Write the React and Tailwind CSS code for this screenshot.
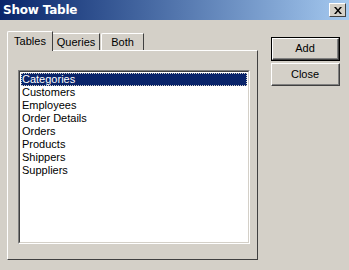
import React from "react";

const items = ["Categories","Customers","Employees","Order Details","Orders","Products","Shippers","Suppliers"];

export default function App() {
  return (
    <div className="w-[349px] h-[270px] bg-[#d4d0c8] flex flex-col overflow-hidden" style={{fontFamily: '"Liberation Sans", Arial, sans-serif'}}>
      <div className="h-[20px] flex items-center justify-between pl-[3px] pr-[3px] bg-gradient-to-r from-[#0a246a] to-[#a6caf0]">
        <span className="text-white font-bold text-[12px] leading-none" style={{fontFamily: '"DejaVu Sans", sans-serif', letterSpacing: '-0.2px'}}>Show Table</span>
        <div className="w-[17px] h-[14px] bg-[#d4d0c8] border-t border-l border-white border-r border-b border-r-[#404040] border-b-[#404040] flex items-center justify-center">
          <svg width="8" height="7" viewBox="0 0 8 7">
            <path d="M0 0h2l2 2.5L6 0h2L5 3.5 8 7H6L4 4.5 2 7H0l3-3.5z" fill="#000" />
          </svg>
        </div>
      </div>
      <div className="flex flex-row pl-[7px] pt-[11px]">
        <div className="flex flex-col w-[251px]">
          <div className="flex flex-row items-end h-[19px] relative z-10">
            <div className="w-[46px] h-[20px] bg-[#d4d0c8] border-l border-t border-white border-r border-r-[#404040] rounded-tl-[2px] flex items-start justify-center pt-[3px] text-[11px] text-black leading-[13px] -mb-px">Tables</div>
            <div className="w-[47px] h-[17px] bg-[#d4d0c8] border-t border-white border-r border-r-[#404040] flex items-start justify-center pt-[2px] text-[11px] text-black leading-[13px]">Queries</div>
            <div className="w-[43px] h-[17px] bg-[#d4d0c8] border-t border-l border-white border-r border-r-[#404040] rounded-tl-[2px] flex items-start justify-center pt-[2px] text-[11px] text-black leading-[13px] ml-px">Both</div>
          </div>
          <div className="h-[210px] border-l border-t border-white border-r border-b border-r-[#404040] border-b-[#404040] pl-[10px] pt-[19px] pr-[7px] pb-[15px] flex">
            <div className="flex-1 border-l border-t border-[#808080] border-r border-b border-r-white border-b-white">
              <div className="h-full border-l border-t border-[#404040] border-r border-b border-r-[#d4d0c8] border-b-[#d4d0c8] bg-white pt-[1px] px-[1px]">
                {items.map((t, i) => (
                  <div key={t} className={i === 0 ? "h-[13px] bg-[#0a246a] text-white text-[11px] leading-[12px] pl-[1px] outline-1 outline-dotted outline-[#d4d0c8] -outline-offset-1" : "h-[13px] text-black text-[11px] leading-[13px] pl-[1px]"}>{t}</div>
                ))}
              </div>
            </div>
          </div>
        </div>
        <div className="flex flex-col ml-[13px] mt-[6px] gap-[2px]">
          <div className="w-[69px] h-[24px] border border-black">
            <div className="h-full border-l border-t border-white border-r border-b border-r-[#404040] border-b-[#404040]">
              <div className="h-full border-r border-b border-[#808080] flex items-center justify-center text-[11px] text-black">Add</div>
            </div>
          </div>
          <div className="w-[69px] h-[23px] border-l border-t border-white border-r border-b border-r-[#404040] border-b-[#404040]">
            <div className="h-full border-r border-b border-[#808080] flex items-center justify-center text-[11px] text-black">Close</div>
          </div>
        </div>
      </div>
    </div>
  );
}
